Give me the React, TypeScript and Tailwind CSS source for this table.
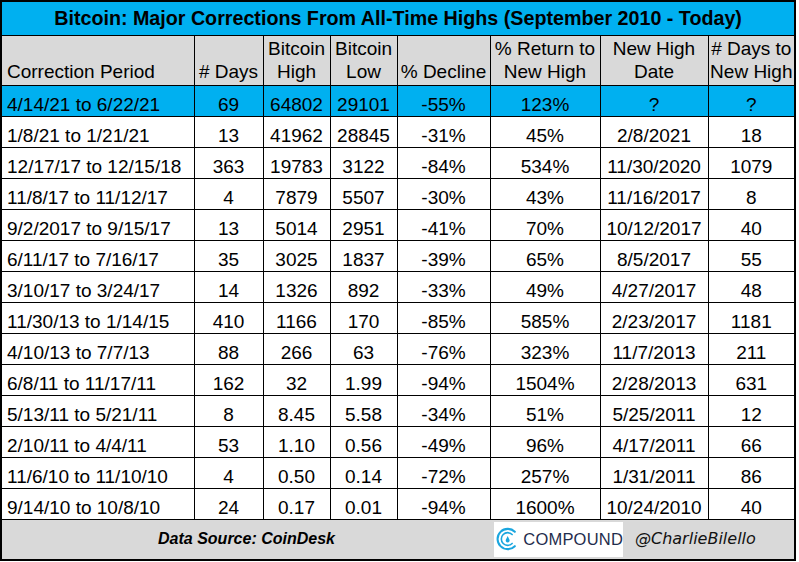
const rows: string[][] = [
  ['4/14/21 to 6/22/21', '69', '64802', '29101', '-55%', '123%', '?', '?'],
  ['1/8/21 to 1/21/21', '13', '41962', '28845', '-31%', '45%', '2/8/2021', '18'],
  ['12/17/17 to 12/15/18', '363', '19783', '3122', '-84%', '534%', '11/30/2020', '1079'],
  ['11/8/17 to 11/12/17', '4', '7879', '5507', '-30%', '43%', '11/16/2017', '8'],
  ['9/2/2017 to 9/15/17', '13', '5014', '2951', '-41%', '70%', '10/12/2017', '40'],
  ['6/11/17 to 7/16/17', '35', '3025', '1837', '-39%', '65%', '8/5/2017', '55'],
  ['3/10/17 to 3/24/17', '14', '1326', '892', '-33%', '49%', '4/27/2017', '48'],
  ['11/30/13 to 1/14/15', '410', '1166', '170', '-85%', '585%', '2/23/2017', '1181'],
  ['4/10/13 to 7/7/13', '88', '266', '63', '-76%', '323%', '11/7/2013', '211'],
  ['6/8/11 to 11/17/11', '162', '32', '1.99', '-94%', '1504%', '2/28/2013', '631'],
  ['5/13/11 to 5/21/11', '8', '8.45', '5.58', '-34%', '51%', '5/25/2011', '12'],
  ['2/10/11 to 4/4/11', '53', '1.10', '0.56', '-49%', '96%', '4/17/2011', '66'],
  ['11/6/10 to 11/10/10', '4', '0.50', '0.14', '-72%', '257%', '1/31/2011', '86'],
  ['9/14/10 to 10/8/10', '24', '0.17', '0.01', '-94%', '1600%', '10/24/2010', '40'],
]

const headers: string[][] = [
  ['Correction Period'],
  ['# Days'],
  ['Bitcoin', 'High'],
  ['Bitcoin', 'Low'],
  ['% Decline'],
  ['% Return to', 'New High'],
  ['New High', 'Date'],
  ['# Days to', 'New High'],
]

function CompoundLogo() {
  return (
    <div className="flex h-[35px] w-[129px] items-center bg-white pl-[1px]">
      <svg width="30" height="30" viewBox="0 0 30 30" fill="none">
        <path d="M23.5 6.5 A12 12 0 1 0 23.5 23.5" stroke="#1aa6df" strokeWidth="2.4" strokeLinecap="round" />
        <path d="M20.3 9.7 A7.5 7.5 0 1 0 20.3 20.3" stroke="#1aa6df" strokeWidth="1.9" strokeLinecap="round" />
        <path d="M15 11.4 L17 15.6 A2.3 2.3 0 1 1 13 15.6 Z" fill="#1aa6df" />
      </svg>
      <span className="ml-[3px] text-[16.5px] leading-none tracking-[0.2px] text-[#1f2d4d]">COMPOUND</span>
    </div>
  )
}

export default function App() {
  return (
    <div className="h-[562px] w-[799px] bg-white font-['Liberation_Sans',Arial,sans-serif] text-black">
      <table className="w-[794px] table-fixed border-collapse border-2 border-black">
        <colgroup>
          <col className="w-[193px]" />
          <col className="w-[69px]" />
          <col className="w-[67px]" />
          <col className="w-[67px]" />
          <col className="w-[93px]" />
          <col className="w-[110px]" />
          <col className="w-[108px]" />
          <col className="w-[87px]" />
        </colgroup>
        <thead>
          <tr className="h-[34px] bg-[#00b0f0]">
            <th colSpan={8} className="border border-black text-center align-middle text-[19.7px] font-bold leading-[22px]">
              Bitcoin: Major Corrections From All-Time Highs (September 2010 - Today)
            </th>
          </tr>
          <tr className="h-[50px] bg-[#d9d9d9]">
            {headers.map((h, i) => (
              <th
                key={i}
                className={`border border-black pb-[2px] align-bottom text-[19px] font-normal leading-[23px] whitespace-nowrap ${i === 0 ? 'pl-[5px] text-left' : 'text-center'}`}
              >
                {h.map((line) => (
                  <div key={line}>{line}</div>
                ))}
              </th>
            ))}
          </tr>
        </thead>
        <tbody>
          {rows.map((r, ri) => (
            <tr key={ri} className={`h-[31px] ${ri === 0 ? 'bg-[#00b0f0]' : 'bg-white'}`}>
              {r.map((c, ci) => (
                <td
                  key={ci}
                  className={`border border-black pb-0 align-bottom text-[19px] leading-[23px] whitespace-nowrap ${ci === 0 ? 'pl-[5px] text-left' : 'text-center'}`}
                >
                  {c}
                </td>
              ))}
            </tr>
          ))}
          <tr className="h-[41px] bg-[#d9d9d9]">
            <td colSpan={8} className="border border-black p-0 align-middle">
              <div className="flex items-center">
                <div className="w-[489px] text-center text-[16px] font-bold italic">Data Source: CoinDesk</div>
                <div className="ml-[3px]">
                  <CompoundLogo />
                </div>
                <div className="ml-[12px] font-['DejaVu_Sans',sans-serif] text-[16px] italic text-[#111]">@CharlieBilello</div>
              </div>
            </td>
          </tr>
        </tbody>
      </table>
    </div>
  )
}
